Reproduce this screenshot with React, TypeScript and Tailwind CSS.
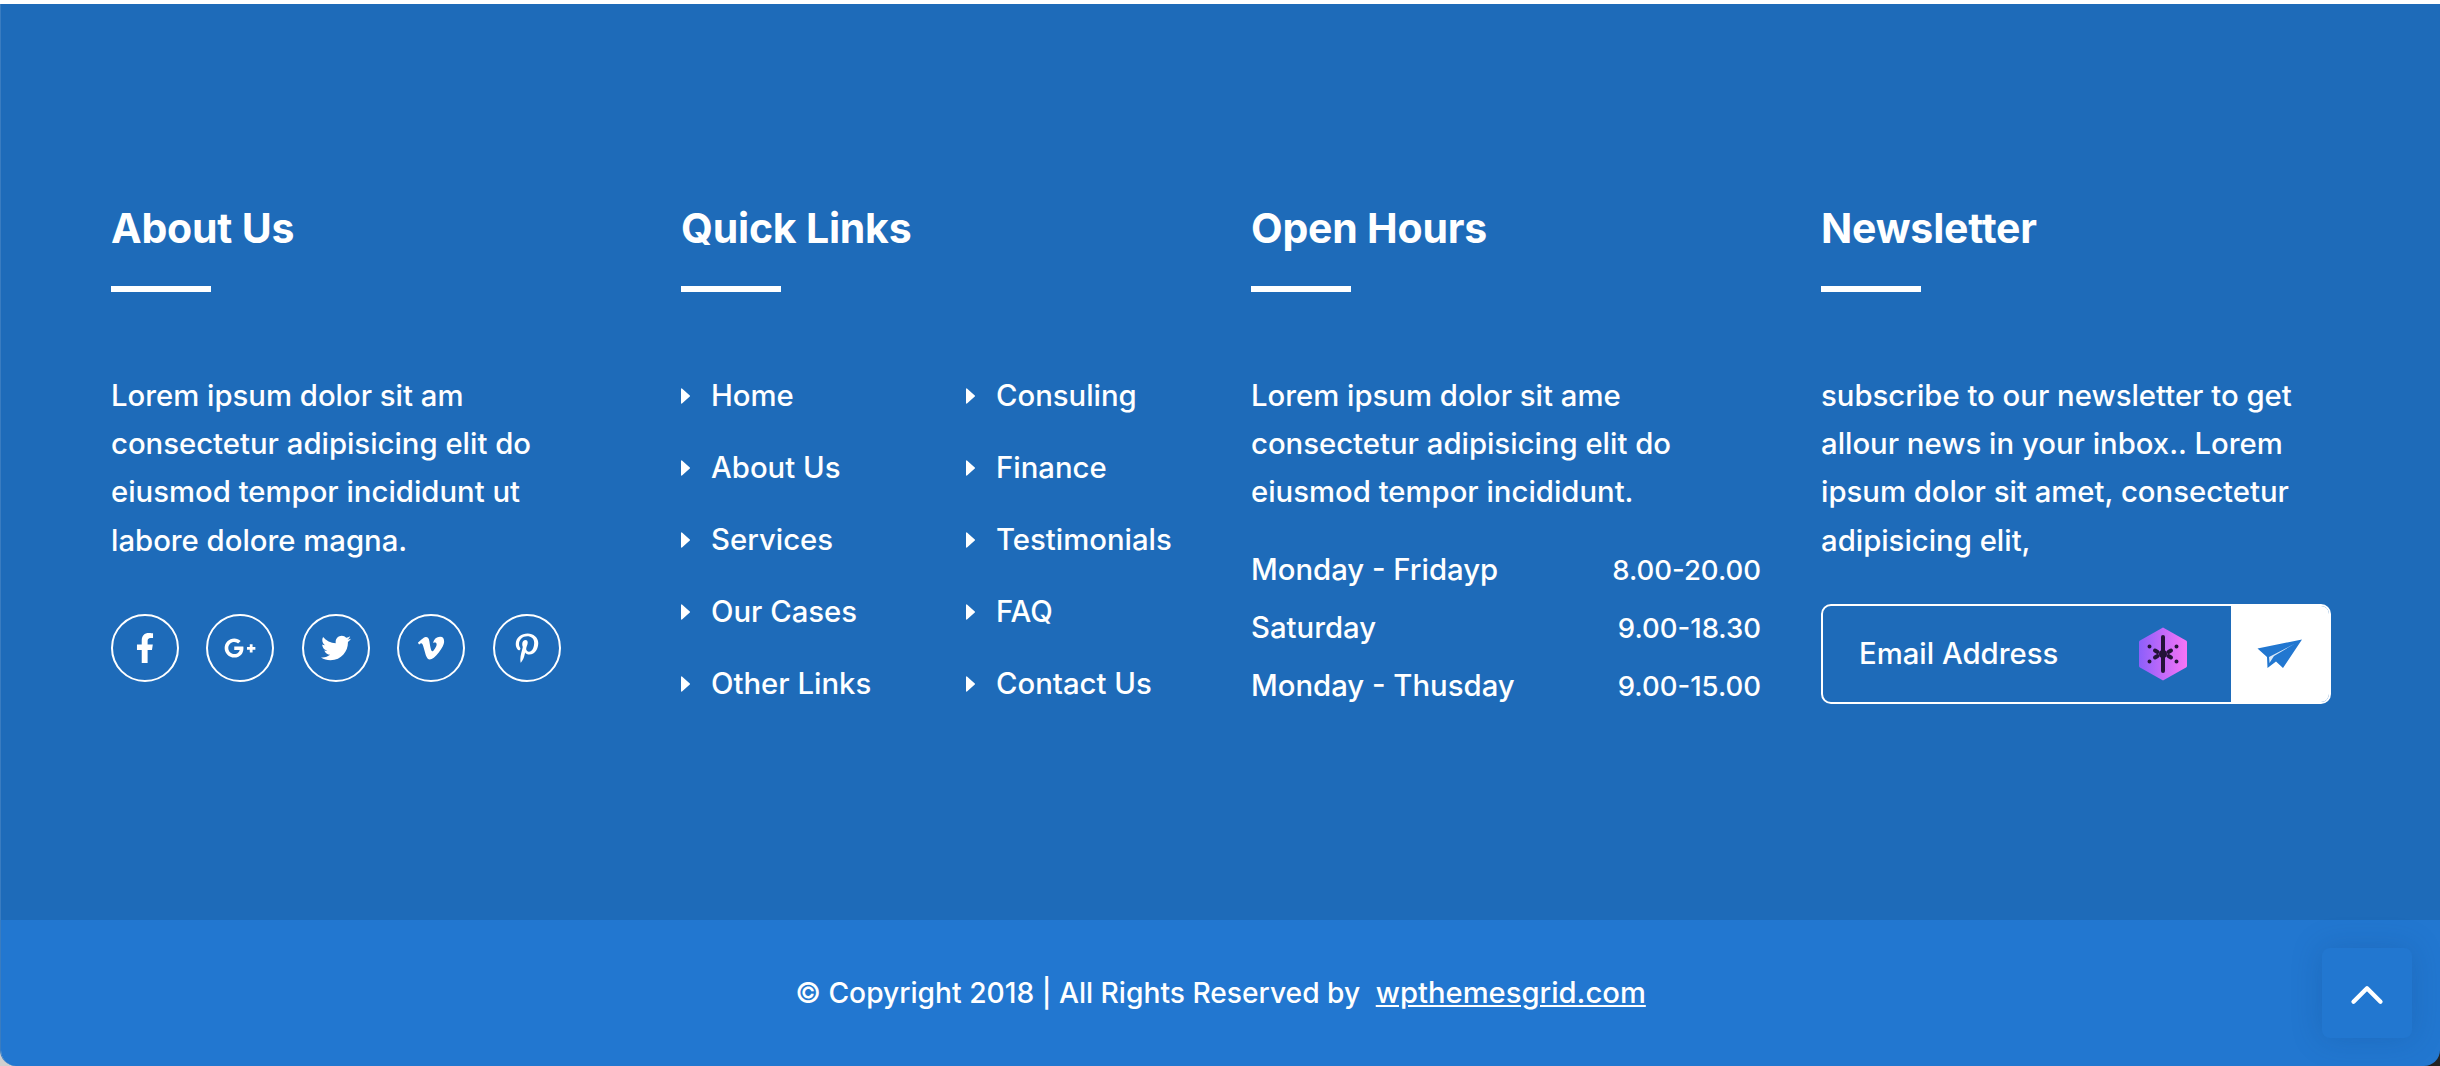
import type { ReactNode } from 'react';
import { FaFacebookF, FaGooglePlusG, FaTwitter, FaVimeoV, FaPinterestP } from 'react-icons/fa';
import { ChevronUp } from 'lucide-react';

const linksLeft = ['Home', 'About Us', 'Services', 'Our Cases', 'Other Links'];
const linksRight = ['Consuling', 'Finance', 'Testimonials', 'FAQ', 'Contact Us'];
const hours = [
    ['Monday - Fridayp', '8.00-20.00'],
    ['Saturday', '9.00-18.30'],
    ['Monday - Thusday', '9.00-15.00'],
];

function Title({ children }: { children: ReactNode }) {
    return (
        <div>
            <h3 className="mt-px text-[41px] leading-[48px] font-bold tracking-[-0.2px]">{children}</h3>
            <div className="mt-[34px] h-[6px] w-[100px] bg-white" />
        </div>
    );
}

function LinkList({ items }: { items: string[] }) {
    return (
        <ul className="flex flex-col gap-6">
            {items.map((item) => (
                <li key={item} className="flex h-12 items-center">
                    <svg width="9" height="16" viewBox="0 0 9 16" className="shrink-0">
                        <path d="M1 0.5 8.5 7.2a1 1 0 0 1 0 1.6L1 15.5a.6.6 0 0 1-1-.5V1a.6.6 0 0 1 1-.5Z" fill="#ffffff" />
                    </svg>
                    <span className="ml-[21px]">{item}</span>
                </li>
            ))}
        </ul>
    );
}

function Social({ children }: { children: ReactNode }) {
    return (
        <a className="flex h-[68px] w-[68px] items-center justify-center rounded-full border-2 border-white text-[30px]">
            {children}
        </a>
    );
}

function HexIcon() {
    return (
        <svg width="48" height="54" viewBox="0 0 48 54" className="shrink-0">
            <defs>
                <linearGradient id="hex" x1="0" x2="1" y1="0" y2="0">
                    <stop offset="0" stopColor="#8c5ffb" />
                    <stop offset="1" stopColor="#f874f6" />
                </linearGradient>
            </defs>
            <path d="M24 0.5 47 13.5a2 2 0 0 1 1 1.5V39a2 2 0 0 1-1 1.5L24 53.5 1 40.5a2 2 0 0 1-1-1.5V15a2 2 0 0 1 1-1.5Z" fill="url(#hex)" />
            <g stroke="#241338" strokeWidth="4" strokeLinecap="round">
                <path d="M24 10V44" />
                <path d="M10.5 19.5V19.5M37.5 19.5V19.5M10.5 34.5V34.5M37.5 34.5V34.5" />
                <path d="M16 23.5 18.5 25M32 23.5 29.5 25M16 30.5 18.5 29M32 30.5 29.5 29" />
            </g>
            <circle cx="24" cy="27" r="4" fill="#241338" />
        </svg>
    );
}

function PlaneIcon() {
    return (
        <svg width="46" height="30" viewBox="0 0 46 30" className="shrink-0">
            <path d="M45 0.5 0.5 9.5 10 18 10.5 29 19 22.5 26 29Z" fill="#2277d0" />
            <path d="M38 4.5 12 18 12.5 24 17 17Z" fill="#dbe9f8" />
        </svg>
    );
}

export default function App() {
    return (
        <div
            className="flex h-[1066px] w-full flex-col overflow-hidden bg-[linear-gradient(90deg,#cfcfcf_50%,#222222_50%)] text-white"
            style={{ fontFamily: 'Inter, "Open Sans", sans-serif' }}
        >
            <div className="h-1 bg-white" />
            <div className="flex flex-1 flex-col overflow-hidden rounded-b-2xl border-l border-l-[#3a7cc0] text-[29.3px] leading-[48.2px] font-[450]">
                <main className="h-[916px] bg-[#1e6bb9] pt-[199px]">
                    <div className="grid grid-cols-4 gap-x-[60px] pl-[110px] pr-[109px]">
                        <section>
                            <Title>About Us</Title>
                            <p className="mt-20">
                                Lorem ipsum dolor sit am<br />
                                consectetur adipisicing elit do<br />
                                eiusmod tempor incididunt ut<br />
                                labore dolore magna.
                            </p>
                            <div className="mt-[49px] flex gap-[27.4px]">
                                <Social><FaFacebookF /></Social>
                                <Social><FaGooglePlusG className="text-[32px]" /></Social>
                                <Social><FaTwitter /></Social>
                                <Social><FaVimeoV /></Social>
                                <Social><FaPinterestP /></Social>
                            </div>
                        </section>
                        <section>
                            <Title>Quick Links</Title>
                            <div className="mt-20 grid grid-cols-[285px_1fr]">
                                <LinkList items={linksLeft} />
                                <LinkList items={linksRight} />
                            </div>
                        </section>
                        <section>
                            <Title>Open Hours</Title>
                            <p className="mt-20">
                                Lorem ipsum dolor sit ame<br />
                                consectetur adipisicing elit do<br />
                                eiusmod tempor incididunt.
                            </p>
                            <div className="mt-[29.4px] flex flex-col gap-[9.6px]">
                                {hours.map(([day, time]) => (
                                    <div key={day} className="flex justify-between">
                                        <span>{day}</span>
                                        <span className="text-[27.5px]">{time}</span>
                                    </div>
                                ))}
                            </div>
                        </section>
                        <section>
                            <Title>Newsletter</Title>
                            <p className="mt-20">
                                subscribe to our newsletter to get<br />
                                allour news in your inbox.. Lorem<br />
                                ipsum dolor sit amet, consectetur<br />
                                adipisicing elit,
                            </p>
                            <form className="mt-[39px] flex h-[100px] overflow-hidden rounded-[10px] border-2 border-white">
                                <div className="flex flex-1 items-center justify-between pl-[36px] pr-[44px]">
                                    <span>Email Address</span>
                                    <HexIcon />
                                </div>
                                <button type="button" className="flex w-[98px] items-center justify-center bg-white">
                                    <PlaneIcon />
                                </button>
                            </form>
                        </section>
                    </div>
                </main>
                <footer className="relative flex flex-1 items-center justify-center bg-[#2277d0]">
                    <p className="text-[28.2px]">
                        © Copyright 2018 | All Rights Reserved by <a className="ml-2 text-[29.2px] underline">wpthemesgrid.com</a>
                    </p>
                    <button
                        type="button"
                        className="absolute right-[28px] top-[28px] flex h-[90px] w-[90px] items-center justify-center rounded-lg bg-[#2277d0] shadow-[0_0_30px_rgba(20,70,130,0.25)]"
                    >
                        <ChevronUp size={54} strokeWidth={1.9} className="mt-[3px]" />
                    </button>
                </footer>
            </div>
        </div>
    );
}
